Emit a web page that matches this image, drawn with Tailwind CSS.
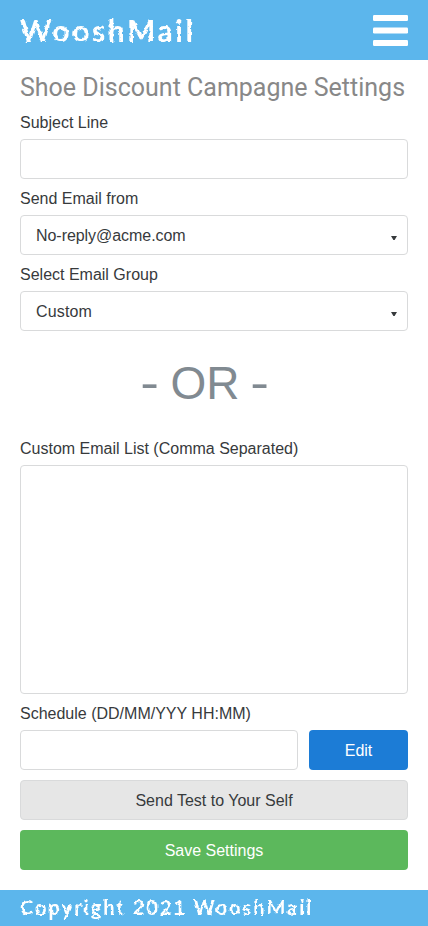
<!DOCTYPE html>
<html lang="en">
<head>
<meta charset="utf-8">
<title>WooshMail</title>
<script src="https://cdn.jsdelivr.net/npm/@tailwindcss/browser@4"></script>
</head>
<body class="flex h-[926px] w-[428px] flex-col overflow-hidden bg-white font-['Liberation_Sans',sans-serif] text-base leading-6 text-[#373a3c]">
<header class="flex h-[60px] shrink-0 items-center justify-between bg-[#5cb6ec] px-5 text-white">
  <div class="whitespace-nowrap font-['Chalkduster','Lato',sans-serif] text-[30px] font-bold leading-[62px] tracking-[2.6px] [filter:url(#chalk)]">WooshMail</div>
  <svg class="h-[31px] w-[35px]" viewBox="0 0 35 31" fill="currentColor" aria-label="Menu"><filter id="chalk" x="-5%" y="-5%" width="110%" height="110%"><feTurbulence type="fractalNoise" baseFrequency="0.22" numOctaves="2" seed="4" result="n"/><feDisplacementMap in="SourceGraphic" in2="n" scale="3.5" xChannelSelector="R" yChannelSelector="G"/></filter><rect width="35" height="6" rx="1.2"/><rect y="12.5" width="35" height="6" rx="1.2"/><rect y="25" width="35" height="6" rx="1.2"/></svg>
</header>
<main class="flex h-[830px] shrink-0 flex-col px-5 pt-[10px]">
  <h1 class="h-10 whitespace-nowrap font-['Roboto',sans-serif] text-[25px] leading-[36px] text-[#888]">Shoe Discount Campagne Settings</h1>
  <label class="h-[29px] pt-px">Subject Line</label>
  <div class="h-10 shrink-0 rounded border border-[#d9dadb]"></div>
  <label class="mt-[7px] h-[29px] pt-px">Send Email from</label>
  <div class="flex h-10 shrink-0 items-center justify-between rounded border border-[#d9dadb] pl-[15px] pr-[10px]"><span class="pt-0.5 tracking-[-0.05px]">No-reply@acme.com</span><svg class="mt-[5px] h-1 w-[6px]" viewBox="0 0 6 4" fill="#373a3c"><path d="M0 0h6L3.6 4H2.4z"/></svg></div>
  <label class="mt-[7px] h-[29px] pt-px">Select Email Group</label>
  <div class="flex h-10 shrink-0 items-center justify-between rounded border border-[#d9dadb] pl-[15px] pr-[10px]"><span class="pt-0.5 tracking-[0.15px]">Custom</span><svg class="mt-[5px] h-1 w-[6px]" viewBox="0 0 6 4" fill="#373a3c"><path d="M0 0h6L3.6 4H2.4z"/></svg></div>
  <div class="h-[105px] shrink-0 pr-[18px] text-center text-[46px] leading-[105px] text-[#818a91]"><span class="inline-block scale-x-[1.22]">-</span> OR <span class="inline-block scale-x-[1.22]">-</span></div>
  <label class="h-[29px] pt-px">Custom Email List (Comma Separated)</label>
  <div class="h-[229px] shrink-0 rounded border border-[#d9dadb]"></div>
  <label class="mt-[7px] h-[29px] pt-px">Schedule (DD/MM/YYY HH:MM)</label>
  <div class="flex gap-[11px]">
    <div class="h-10 w-[278px] rounded border border-[#d9dadb]"></div>
    <button class="h-10 flex-1 rounded bg-[#1c7cd6] pt-0.5 text-white">Edit</button>
  </div>
  <button class="mt-[10px] h-10 shrink-0 rounded border border-[#d9dadb] bg-[#e6e6e6] pt-0.5">Send Test to Your Self</button>
  <button class="mt-[10px] h-10 shrink-0 rounded bg-[#5cb85c] pt-0.5 text-white">Save Settings</button>
</main>
<footer class="h-9 shrink-0 whitespace-nowrap bg-[#5cb6ec] px-5 font-['Chalkduster','Lato',sans-serif] text-[20px] font-bold leading-[35px] tracking-[2px] text-white"><span class="inline-block [filter:url(#chalk)]">Copyright 2021 WooshMail</span></footer>
</body>
</html>
